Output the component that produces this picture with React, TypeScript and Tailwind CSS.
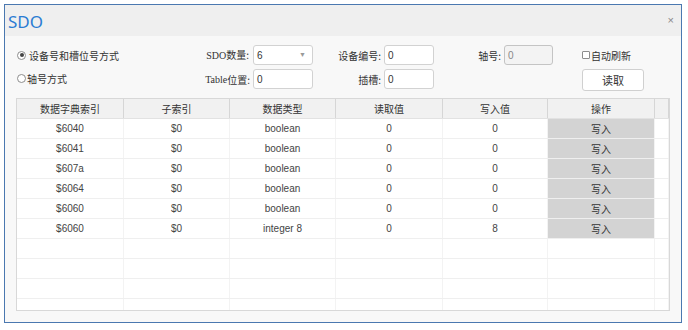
import React from "react";

const cjk = { fontFamily: '"Noto Sans CJK SC", "Noto Sans", sans-serif' };
const latin = { fontFamily: '"Liberation Sans", "Noto Sans CJK SC", sans-serif' };

const rows = [
  ["$6040", "$0", "boolean", "0", "0"],
  ["$6041", "$0", "boolean", "0", "0"],
  ["$607a", "$0", "boolean", "0", "0"],
  ["$6064", "$0", "boolean", "0", "0"],
  ["$6060", "$0", "boolean", "0", "0"],
  ["$6060", "$0", "integer 8", "0", "8"],
];

const widths = ["w-[107px]", "w-[106px]", "w-[106px]", "w-[107px]", "w-[105px]", "w-[107px]", "w-[14px]"];
const headers = ["数据字典索引", "子索引", "数据类型", "读取值", "写入值", "操作", ""];

function Input({ value, w, disabled, dropdown }: { value: string; w: string; disabled?: boolean; dropdown?: boolean }) {
  return (
    <div
      className={`${w} h-[20px] rounded-[3px] border flex items-center justify-between pl-[3px] pr-[6px] text-[10px] text-[#333] ${
        disabled ? "border-[#c4c4c4] bg-[#f3f3f3] text-[#888]" : "border-[#d2d2d2] bg-white"
      }`}
      style={latin}
    >
      <span>{value}</span>
      {dropdown && <span className="text-[7px] text-[#999]">▼</span>}
    </div>
  );
}

export default function App() {
  return (
    <div className="w-[688px] h-[330px] bg-white pt-[4px] pl-[4px]" style={cjk}>
      <div className="w-[678px] h-[319px] border border-[#4a78b0] bg-[#f8f8f8] flex flex-col">
        {/* title bar */}
        <div className="h-[31px] bg-[#efefef] flex items-center justify-between pl-[3px] pr-[7px]">
          <span className="text-[17px] leading-none text-[#2b7cd3] mt-[2px]" style={{ fontFamily: '"Noto Sans", "Open Sans", sans-serif' }}>
            SDO
          </span>
          <span className="text-[11px] text-[#8a8a8a] leading-none" style={latin}>×</span>
        </div>

        {/* form */}
        <div className="pt-[9px] pl-[11px] flex flex-col gap-[4px] text-[10px] text-[#333]">
          <div className="flex items-center h-[20px]">
            <div className="w-[184px] flex items-center">
              <span className="w-[9px] h-[9px] rounded-full border border-[#8d8d8d] bg-white flex items-center justify-center ml-[1px]">
                <span className="w-[4px] h-[4px] rounded-full bg-[#444]" />
              </span>
              <span className="ml-[3px]">设备号和槽位号方式</span>
            </div>
            <div className="w-[53px] text-right pr-[4px]">
              <span style={{ fontFamily: '"Liberation Serif", serif' }}>SDO</span>数量:
            </div>
            <Input value="6" w="w-[60px]" dropdown />
            <div className="w-[71px] text-right pr-[3px]">设备编号:</div>
            <Input value="0" w="w-[50px]" />
            <div className="w-[70px] text-right pr-[3px]">轴号:</div>
            <Input value="0" w="w-[49px]" disabled />
            <div className="ml-[29px] flex items-center">
              <span className="w-[8px] h-[8px] border border-[#8d8d8d] bg-white rounded-[1px]" />
              <span className="ml-[1px]">自动刷新</span>
            </div>
          </div>
          <div className="flex items-start h-[22px]">
            <div className="w-[184px] flex items-center h-[18px]">
              <span className="w-[9px] h-[9px] rounded-full border border-[#8d8d8d] bg-white ml-[1px]" />
              <span className="ml-[1px]">轴号方式</span>
            </div>
            <div className="w-[53px] text-right pr-[3px] h-[20px] flex items-center justify-end">
              <span style={{ fontFamily: '"Liberation Serif", serif' }}>Table</span>位置:
            </div>
            <Input value="0" w="w-[60px]" />
            <div className="w-[71px] text-right pr-[3px] h-[20px] flex items-center justify-end">插槽:</div>
            <Input value="0" w="w-[50px]" />
            <div className="ml-[148px] w-[62px] h-[22px] rounded-[3px] border border-[#d0d0d0] bg-white flex items-center justify-center text-[11px]">
              读取
            </div>
          </div>
        </div>

        {/* table */}
        <div className="mt-[7px] ml-[11px] w-[654px] h-[213px] border border-[#d8d8d8] bg-white overflow-hidden">
          <div className="flex h-[20px] bg-[#f1f1f1] border-b border-[#e2e2e2]">
            {headers.map((h, i) => (
              <div
                key={i}
                className={`${widths[i]} shrink-0 border-r border-[#d6d6d6] flex items-center justify-center text-[10px] text-[#333]`}
              >
                {h}
              </div>
            ))}
          </div>
          {Array.from({ length: 10 }).map((_, r) => {
            const d = rows[r];
            return (
              <div key={r} className="flex h-[20px] border-b border-[#efefef]">
                {widths.map((w, c) => (
                  <div
                    key={c}
                    className={`${w} shrink-0 border-r border-[#f3f3f3] flex items-center justify-center text-[10px] text-[#444]`}
                    style={latin}
                  >
                    {d && c < 5 && d[c]}
                    {d && c === 5 && (
                      <div className="w-full h-[19px] bg-[#d3d3d3] flex items-center justify-center text-[#333]" style={cjk}>
                        写入
                      </div>
                    )}
                  </div>
                ))}
              </div>
            );
          })}
        </div>
      </div>
    </div>
  );
}
